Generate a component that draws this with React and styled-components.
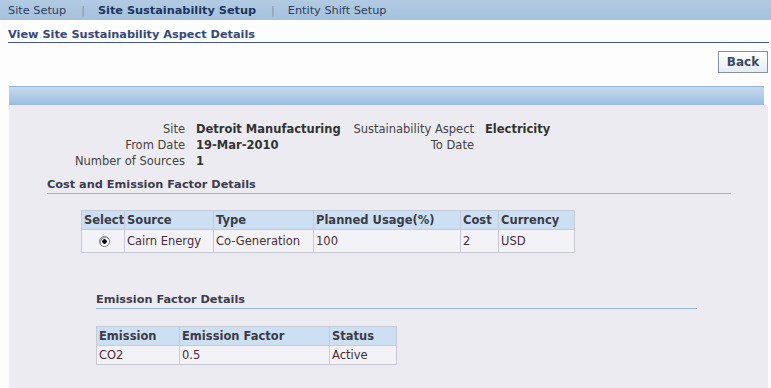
import React from "react";
import styled, { createGlobalStyle } from "styled-components";

const Global = createGlobalStyle`
  html, body { margin: 0; padding: 0; background: #fcfdfc; }
  body { font-family: "DejaVu Sans", Tahoma, sans-serif; font-size: 11.5px; color: #333; }
`;

const Page = styled.div`
  width: 771px;
  height: 388px;
  overflow: hidden;
  display: flex;
  flex-direction: column;
`;

const TabBar = styled.div`
  height: 20px;
  background: linear-gradient(#b2cbe3, #a5c1dc);
  display: flex;
  align-items: center;
  padding-left: 8px;
`;

const Tab = styled.span`
  color: ${(p) => (p.$active ? "#1e3560" : "#2e3d5f")};
  font-weight: ${(p) => (p.$active ? "bold" : "normal")};
  font-size: 11.3px;
`;

const Sep = styled.span`
  color: #7f93ad;
  margin: 0 13px 0 15px;
  font-size: 11px;
`;

const Title = styled.div`
  margin: 7px 2px 0 8px;
  border-bottom: 1px solid #3f5b86;
  color: #36487a;
  font-weight: bold;
  font-size: 11.3px;
  line-height: 15px;
`;

const ButtonRow = styled.div`
  display: flex;
  justify-content: flex-end;
  padding: 8px 3px 0 0;
`;

const Button = styled.button`
  font-family: inherit;
  font-weight: bold;
  font-size: 12px;
  color: #3a4a62;
  height: 22px;
  width: 50px;
  border: 1px solid #8191a8;
  background: linear-gradient(#ffffff, #e4ecf6);
  padding: 0;
`;

const Band = styled.div`
  margin: 13px 7px 0 9px;
  height: 18px;
  border-top: 1px solid #93b3d4;
  background: linear-gradient(#c5daee, #9cbde0);
`;

const Content = styled.div`
  margin: 0 3px 0 9px;
  flex: 1;
  background: #ecebf2;
  padding-top: 16px;
`;

const InfoGrid = styled.div`
  display: grid;
  grid-template-columns: 176px 139px 128px auto;
  column-gap: 11px;
  line-height: 16px;
  align-items: baseline;
`;

const Label = styled.span`
  text-align: right;
  color: #434343;
  white-space: nowrap;
`;

const Value = styled.span`
  font-weight: bold;
  color: #333;
  white-space: nowrap;
`;

const SectionHeader = styled.div`
  margin: ${(p) => p.$margin};
  border-bottom: 1px solid #93b7dc;
  color: #3c3c50;
  font-weight: bold;
  font-size: 11.3px;
  line-height: 15px;
  padding-bottom: 1px;
`;

const Table = styled.table`
  border-collapse: collapse;
  table-layout: fixed;
  margin: ${(p) => p.$margin};
  font-size: 11.5px;
`;

const Th = styled.th`
  background: #cde0f3;
  border: 1px solid #c7c9d6;
  text-align: left;
  color: #3b3b48;
  font-weight: bold;
  height: 18px;
  padding: 0 0 0 2px;
  white-space: nowrap;
  overflow: hidden;
`;

const Td = styled.td`
  background: #f3f2f6;
  border: 1px solid #c7c9d6;
  color: #4b2c3e;
  height: ${(p) => p.$h || 18}px;
  padding: 0 0 0 2px;
  text-align: ${(p) => (p.$center ? "center" : "left")};
  white-space: nowrap;
  overflow: hidden;
`;

const Radio = styled.span`
  display: inline-block;
  width: 9px;
  height: 9px;
  border-radius: 50%;
  border: 1px solid #7a7a7a;
  background: radial-gradient(circle, #000 0 2px, #fff 2.5px);
  box-shadow: inset 1px 1px 0 #9a9a9a;
  vertical-align: middle;
`;

const mainCols = [43, 89, 100, 147, 38, 76];
const emCols = [83, 150, 67];

export default function App() {
  return (
    <>
      <Global />
      <Page>
        <TabBar>
          <Tab>Site Setup</Tab>
          <Sep>|</Sep>
          <Tab $active>Site Sustainability Setup</Tab>
          <Sep>|</Sep>
          <Tab>Entity Shift Setup</Tab>
        </TabBar>
        <Title>View Site Sustainability Aspect Details</Title>
        <ButtonRow>
          <Button>Back</Button>
        </ButtonRow>
        <Band />
        <Content>
          <InfoGrid>
            <Label>Site</Label>
            <Value>Detroit Manufacturing</Value>
            <Label>Sustainability Aspect</Label>
            <Value>Electricity</Value>
            <Label>From Date</Label>
            <Value>19-Mar-2010</Value>
            <Label>To Date</Label>
            <Value></Value>
            <Label>Number of Sources</Label>
            <Value>1</Value>
          </InfoGrid>
          <SectionHeader $margin="8px 37px 0 38px">Cost and Emission Factor Details</SectionHeader>
          <Table $margin="16px 0 0 72px" style={{ width: mainCols.reduce((a, b) => a + b, 0) }}>
            <colgroup>
              {mainCols.map((w, i) => <col key={i} style={{ width: w }} />)}
            </colgroup>
            <thead>
              <tr>
                <Th>Select</Th>
                <Th>Source</Th>
                <Th>Type</Th>
                <Th>Planned Usage(%)</Th>
                <Th>Cost</Th>
                <Th>Currency</Th>
              </tr>
            </thead>
            <tbody>
              <tr>
                <Td $center $h={22}><Radio /></Td>
                <Td $h={22}>Cairn Energy</Td>
                <Td $h={22}>Co-Generation</Td>
                <Td $h={22}>100</Td>
                <Td $h={22}>2</Td>
                <Td $h={22}>USD</Td>
              </tr>
            </tbody>
          </Table>
          <SectionHeader $margin="39px 71px 0 87px">Emission Factor Details</SectionHeader>
          <Table $margin="17px 0 0 87px" style={{ width: emCols.reduce((a, b) => a + b, 0) }}>
            <colgroup>
              {emCols.map((w, i) => <col key={i} style={{ width: w }} />)}
            </colgroup>
            <thead>
              <tr>
                <Th>Emission</Th>
                <Th>Emission Factor</Th>
                <Th>Status</Th>
              </tr>
            </thead>
            <tbody>
              <tr>
                <Td $h={18}>CO2</Td>
                <Td $h={18}>0.5</Td>
                <Td $h={18}>Active</Td>
              </tr>
            </tbody>
          </Table>
        </Content>
      </Page>
    </>
  );
}
